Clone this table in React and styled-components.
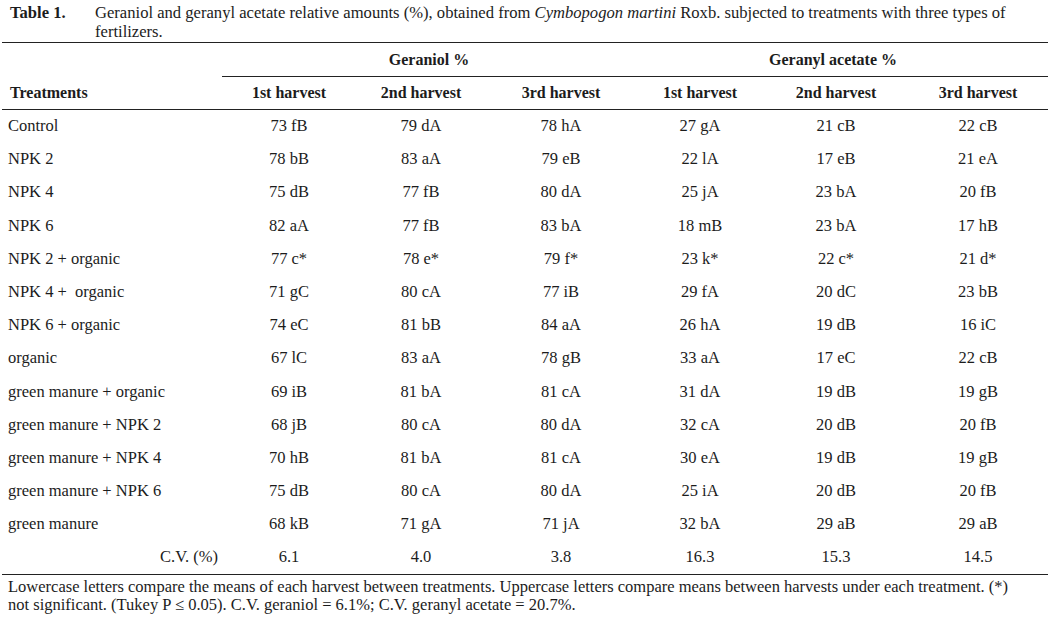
import React from 'react';
import styled, { createGlobalStyle } from 'styled-components';

const GlobalStyle = createGlobalStyle`
  body {
    margin: 0;
    background: #fff;
    color: #1c1c1c;
    font-family: "Liberation Serif", "Times New Roman", serif;
  }
`

const Page = styled.div`
  width: 1046px;
  padding: 3px 0 0 2px;
`

const Caption = styled.div`
  display: flex;
  font-size: 16.6px;
  line-height: 19px;
  padding-left: 8px;
  height: 39px;
`

const CaptionLabel = styled.span`
  flex: 0 0 85px;
  font-weight: bold;
`

const CaptionText = styled.div`
  flex: 1;
  display: flex;
  flex-direction: column;
`

const CaptionLine = styled.span`
  white-space: nowrap;
`

const Table = styled.table`
  width: 1046px;
  border-collapse: collapse;
  table-layout: fixed;
  border-top: 1px solid #222;
  border-bottom: 1px solid #222;
  font-size: 16.5px;
`

const GroupCell = styled.th`
  height: 33px;
  padding: 0 ${p => p.$shift || 0}px 0 0;
  font-size: 16px;
  font-weight: bold;
  text-align: center;
  vertical-align: middle;
  border-bottom: ${p => (p.$rule ? '1px solid #222' : 'none')};
`

const HeadCell = styled.th`
  height: 32px;
  padding: 0 0 0 ${p => (p.$left ? '8px' : '0')};
  font-size: 16px;
  font-weight: bold;
  text-align: ${p => (p.$left ? 'left' : 'center')};
  vertical-align: middle;
  border-bottom: 1px solid #222;
`

const Row = styled.tr`
  height: 33.2px;
`

const Cell = styled.td`
  padding: 0 ${p => (p.$right ? '4px' : '0')} 0 ${p => (p.$left ? '6px' : '0')};
  text-align: ${p => (p.$left ? 'left' : p.$right ? 'right' : 'center')};
  vertical-align: middle;
  white-space: pre;
`

const Note = styled.p`
  margin: 3px 0 0;
  padding-left: 6px;
  max-width: 1012px;
  font-size: 16.5px;
  line-height: 18px;
`

const widths = [220, 134, 130, 150, 128, 144, 140];

const rows = [
  ['Control', '73 fB', '79 dA', '78 hA', '27 gA', '21 cB', '22 cB'],
  ['NPK 2', '78 bB', '83 aA', '79 eB', '22 lA', '17 eB', '21 eA'],
  ['NPK 4', '75 dB', '77 fB', '80 dA', '25 jA', '23 bA', '20 fB'],
  ['NPK 6', '82 aA', '77 fB', '83 bA', '18 mB', '23 bA', '17 hB'],
  ['NPK 2 + organic', '77 c*', '78 e*', '79 f*', '23 k*', '22 c*', '21 d*'],
  ['NPK 4 +  organic', '71 gC', '80 cA', '77 iB', '29 fA', '20 dC', '23 bB'],
  ['NPK 6 + organic', '74 eC', '81 bB', '84 aA', '26 hA', '19 dB', '16 iC'],
  ['organic', '67 lC', '83 aA', '78 gB', '33 aA', '17 eC', '22 cB'],
  ['green manure + organic', '69 iB', '81 bA', '81 cA', '31 dA', '19 dB', '19 gB'],
  ['green manure + NPK 2', '68 jB', '80 cA', '80 dA', '32 cA', '20 dB', '20 fB'],
  ['green manure + NPK 4', '70 hB', '81 bA', '81 cA', '30 eA', '19 dB', '19 gB'],
  ['green manure + NPK 6', '75 dB', '80 cA', '80 dA', '25 iA', '20 dB', '20 fB'],
  ['green manure', '68 kB', '71 gA', '71 jA', '32 bA', '29 aB', '29 aB'],
];

const cv = ['6.1', '4.0', '3.8', '16.3', '15.3', '14.5'];
const harvests = ['1st harvest', '2nd harvest', '3rd harvest'];

const App = () => {
  return (
    <Page>
      <GlobalStyle />
      <Caption>
        <CaptionLabel>Table 1.</CaptionLabel>
        <CaptionText>
          <CaptionLine>
            Geraniol and geranyl acetate relative amounts (%), obtained from <i>Cymbopogon martini</i> Roxb. subjected to treatments with three types of
          </CaptionLine>
          <CaptionLine>fertilizers.</CaptionLine>
        </CaptionText>
      </Caption>
      <Table>
        <colgroup>
          {widths.map((w, i) => <col key={i} style={{ width: w }} />)}
        </colgroup>
        <thead>
          <tr>
            <GroupCell />
            <GroupCell colSpan={3} $rule>Geraniol %</GroupCell>
            <GroupCell colSpan={3} $rule $shift={18}>Geranyl acetate %</GroupCell>
          </tr>
          <tr>
            <HeadCell $left>Treatments</HeadCell>
            {[...harvests, ...harvests].map((h, i) => <HeadCell key={i}>{h}</HeadCell>)}
          </tr>
        </thead>
        <tbody>
          {rows.map((r) => (
            <Row key={r[0]}>
              <Cell $left>{r[0]}</Cell>
              {r.slice(1).map((v, i) => <Cell key={i}>{v}</Cell>)}
            </Row>
          ))}
          <Row>
            <Cell $right>C.V. (%)</Cell>
            {cv.map((v, i) => <Cell key={i}>{v}</Cell>)}
          </Row>
        </tbody>
      </Table>
      <Note>
        Lowercase letters compare the means of each harvest between treatments. Uppercase letters compare means between harvests under each treatment. (*) not significant. (Tukey P ≤ 0.05). C.V. geraniol = 6.1%; C.V. geranyl acetate = 20.7%.
      </Note>
    </Page>
  );
}

export default App;
